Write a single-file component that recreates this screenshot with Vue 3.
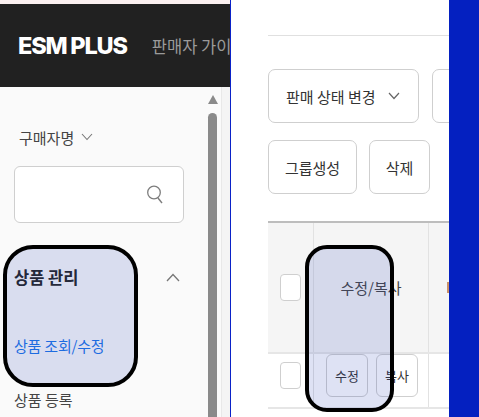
<script setup>
</script>

<template>
  <div class="page">
    <aside class="left">
      <div class="topstrip"></div>
      <header class="brandbar">
        <span class="logo">ESM PLUS</span>
        <span class="guide">판매자 가이드</span>
      </header>
      <div class="sidebody">
        <nav class="nav">
          <div class="buyer">
            <span>구매자명</span>
            <svg class="chev" width="12" height="8" viewBox="0 0 12 8"><path d="M1 1l5 5.5L11 1" fill="none" stroke="#777" stroke-width="1.1"/></svg>
          </div>
          <div class="search">
            <svg width="19" height="21" viewBox="0 0 19 21"><circle cx="8" cy="8.5" r="6.3" fill="none" stroke="#7d7d7d" stroke-width="1.3"/><path d="M12 14l4 5" stroke="#7d7d7d" stroke-width="1.4" fill="none"/></svg>
          </div>
          <div class="group">
            <span class="grouptitle">상품 관리</span>
            <svg width="14" height="9" viewBox="0 0 14 9"><path d="M1 8l6-6.5L13 8" fill="none" stroke="#777" stroke-width="1.3"/></svg>
          </div>
          <a class="sub active">상품 조회/수정</a>
          <a class="sub">상품 등록</a>
        </nav>
        <div class="scrollbar">
          <div class="arrow"></div>
          <div class="thumb"></div>
        </div>
        <div class="gutter"></div>
      </div>
      <div class="mark markleft"></div>
    </aside>

    <main class="main">
      <div class="rule"></div>
      <div class="toolbar">
        <button class="btn status">
          <span>판매 상태 변경</span>
          <svg width="12" height="8" viewBox="0 0 12 8"><path d="M1 1l5 5.5L11 1" fill="none" stroke="#666" stroke-width="1.2"/></svg>
        </button>
        <button class="btn next"></button>
      </div>
      <div class="toolbar second">
        <button class="btn group-btn">그룹생성</button>
        <button class="btn del">삭제</button>
      </div>
      <div class="table">
        <div class="row head">
          <div class="cell c1"><span class="check"></span></div>
          <div class="cell c2">수정/복사</div>
          <div class="cell c3"><i class="tick"></i></div>
        </div>
        <div class="row body">
          <div class="cell c1"><span class="check"></span></div>
          <div class="cell c2 actions">
            <button class="mini edit">수정</button>
            <button class="mini copy">복사</button>
          </div>
          <div class="cell c3"></div>
        </div>
      </div>
      <div class="mark markright"></div>
    </main>

    <div class="blue"></div>
  </div>
</template>

<style>
html, body { margin: 0; background: #fff; }
</style>

<style scoped>
.page {
  display: flex;
  width: 479px;
  height: 417px;
  overflow: hidden;
  position: relative;
  font-family: "Noto Sans CJK KR", "Noto Sans", sans-serif;
}
.left {
  width: 230px;
  flex: none;
  display: flex;
  flex-direction: column;
  border-right: 1px solid #0a22c8;
  position: relative;
  overflow: hidden;
}
.topstrip { height: 4px; background: #fbf0f0; flex: none; }
.brandbar {
  height: 83px;
  flex: none;
  background: #212121;
  display: flex;
  align-items: center;
  padding-left: 18px;
  white-space: nowrap;
  gap: 25px;
}
.logo {
  font-family: "Inter", "Liberation Sans", sans-serif;
  font-weight: 800;
  font-size: 23.5px;
  letter-spacing: -1.2px;
  color: #fff;
}
.guide { font-size: 16.5px; color: #9a9a9a; }
.sidebody { flex: 1; display: flex; background: #fafafa; min-height: 0; }
.nav { flex: 1; min-width: 0; padding: 37px 0 0 14px; box-sizing: border-box; }
.buyer {
  display: flex;
  align-items: center;
  gap: 7px;
  font-size: 15px;
  color: #444;
  padding-left: 5px;
  height: 26px;
}
.search {
  margin-top: 16px;
  width: 170px;
  height: 57px;
  border: 1px solid #cfcfcf;
  border-radius: 6px;
  background: #fff;
  box-sizing: border-box;
  display: flex;
  align-items: center;
  justify-content: flex-end;
  padding-right: 18px;
}
.group {
  margin-top: 42px;
  display: flex;
  align-items: center;
  justify-content: space-between;
  padding-right: 4px;
  height: 24px;
  width: 170px;
  box-sizing: border-box;
}
.grouptitle { font-size: 16.5px; font-weight: 700; color: #222; }
.sub { display: block; font-size: 15px; color: #444; height: 22px; line-height: 22px; white-space: nowrap; }
.sub.active { color: #1a73e8; margin-top: 46px; letter-spacing: -0.2px; }
.sub:not(.active) { margin-top: 32px; }
.scrollbar {
  width: 13px;
  flex: none;
  display: flex;
  flex-direction: column;
  align-items: center;
  padding-right: 4px;
  box-sizing: border-box;
}
.arrow {
  margin-top: 8px;
  width: 0;
  height: 0;
  border-left: 5px solid transparent;
  border-right: 5px solid transparent;
  border-bottom: 9px solid #8a8a8a;
}
.thumb {
  margin-top: 9px;
  width: 9px;
  flex: 1;
  background: #8a8a8a;
  border-radius: 5px 5px 0 0;
}
.gutter { width: 9px; flex: none; background: #f4f4f4; border-left: 1px solid #e8e8e8; box-sizing: border-box; }
.main {
  width: 218px;
  flex: none;
  background: #fff;
  position: relative;
  padding: 35px 0 0 37px;
  box-sizing: border-box;
  overflow: hidden;
}
.rule { height: 1px; background: #e0e0e0; }
.toolbar { display: flex; gap: 13px; margin-top: 33px; }
.toolbar.second { margin-top: 17px; gap: 12px; }
.btn {
  height: 54px;
  border: 1px solid #cfcfcf;
  border-radius: 7px;
  background: #fff;
  font-family: inherit;
  font-size: 15px;
  color: #333;
  flex: none;
  box-sizing: border-box;
  padding: 0;
}
.status { width: 151px; display: flex; align-items: center; justify-content: flex-start; gap: 12px; padding-left: 17px; }
.next { width: 40px; }
.group-btn { width: 89px; }
.del { width: 61px; }
.table { margin-top: 27px; }
.row { display: flex; }
.head { height: 133px; background: #f5f5f5; border-top: 2px solid #bdbdbd; border-bottom: 2px solid #e6e6e6; box-sizing: border-box; }
.body { height: 55px; border-bottom: 2px solid #e6e6e6; box-sizing: border-box; }
.cell { display: flex; align-items: center; justify-content: center; box-sizing: border-box; border-right: 1px solid #e2e2e2; font-size: 15px; color: #444; flex: none; }
.c1 { width: 46px; }
.c2 { width: 115px; }
.c3 { flex: 1; border-right: 0; justify-content: flex-start; padding-left: 18px; }
.check { width: 21px; height: 27px; border: 1px solid #cfcfcf; border-radius: 4px; background: #fff; display: block; box-sizing: border-box; }
.body .c1 { align-items: flex-start; padding-top: 8px; }
.tick { width: 2px; height: 11px; background: #c9906a; display: block; }
.actions { gap: 8px; justify-content: center; align-items: flex-start; padding-left: 2px; }
.mini { border: 1px solid #cfcfcf; border-radius: 6px; background: #fff; font-family: inherit; font-size: 13px; color: #333; height: 43px; width: 42px; padding: 0; box-sizing: border-box; }
.mark {
  position: absolute;
  border: 4px solid #000;
  background: rgba(49, 76, 185, 0.16);
  box-sizing: border-box;
  pointer-events: none;
}
.markleft { left: 3px; top: 245px; width: 135px; height: 142px; border-radius: 30px; }
.markright { left: 74px; top: 245px; width: 89px; height: 167px; border-radius: 22px; }
.blue { flex: 1; background: #0420c0; }
</style>
